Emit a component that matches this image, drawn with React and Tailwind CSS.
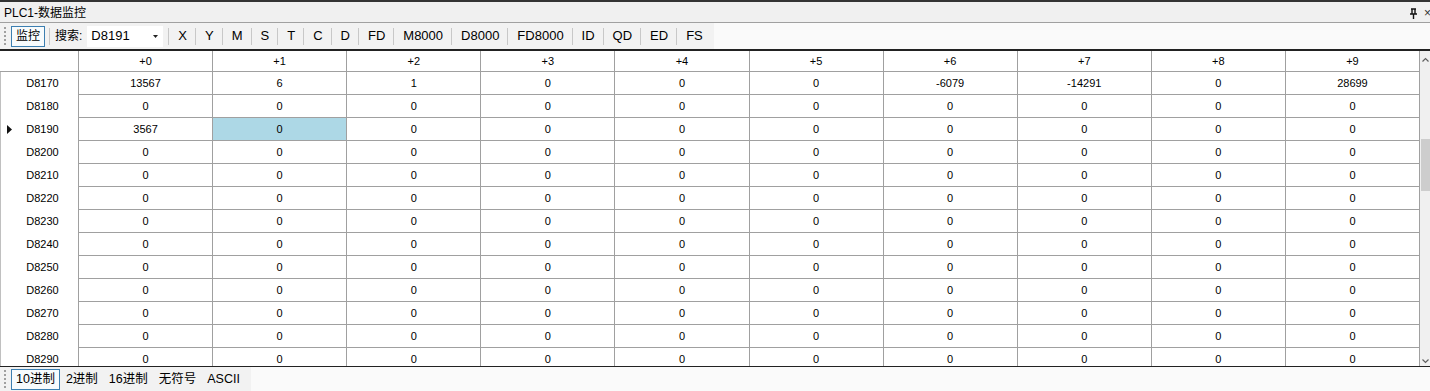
const FONT = { fontFamily: '"Liberation Sans", "Noto Sans CJK SC", sans-serif' };

const rows = [
  ['D8170', ['13567', '6', '1', '0', '0', '0', '-6079', '-14291', '0', '28699']],
  ['D8180'], ['D8190', ['3567', '0', '0', '0', '0', '0', '0', '0', '0', '0']],
  ['D8200'], ['D8210'], ['D8220'], ['D8230'], ['D8240'], ['D8250'],
  ['D8260'], ['D8270'], ['D8280'], ['D8290'],
];

const tools = ['X', 'Y', 'M', 'S', 'T', 'C', 'D', 'FD', 'M8000', 'D8000', 'FD8000', 'ID', 'QD', 'ED', 'FS'];
const modes = ['2进制', '16进制', '无符号', 'ASCII'];

function Grip() {
  return (
    <div className="flex flex-col gap-[2px] px-[4px]">
      {[0, 1, 2, 3, 4].map(i => <span key={i} className="w-[2px] h-[2px] bg-[#a0a0a0]" />)}
    </div>
  );
}

export default function App() {
  return (
    <div className="w-[1430px] h-[391px] overflow-hidden bg-[#f0f0f0] text-black flex flex-col" style={FONT}>
      <div className="h-[2px] bg-[#333]" />
      {/* title */}
      <div className="h-[21px] flex items-center justify-between pl-[4px] pt-[2px] border-b border-[#a0a0a0] bg-[#f0f0f0]">
        <span className="text-[12px]">PLC1-数据监控</span>
        <div className="flex items-center gap-[6px] text-[12px] text-[#333]">
          <svg width="9" height="11" viewBox="0 0 9 11">
            <path d="M2 1h5M3 1v5M6 1v5M1 6h7M4.5 6v5" stroke="#111" strokeWidth="1.4" fill="none" />
          </svg>
          <span className="w-[6px] overflow-hidden leading-none">×</span>
        </div>
      </div>
      {/* toolbar */}
      <div className="h-[26px] flex items-center bg-[#fafafa]">
        <div className="h-full flex items-center bg-[#f2f2f2] pr-[8px] text-[12px]">
          <Grip />
          <div className="h-[21px] px-[4px] flex items-center border border-[#3c7fb1] bg-[#f7fbfd] ml-[1px]">监控</div>
          <span className="w-px h-[17px] bg-[#c8c8c8] mx-[4px]" />
          <span className="ml-[1px]">搜索:</span>
          <div className="h-[21px] w-[76px] ml-[5px] bg-white flex items-center justify-between pl-[4px] pr-[5px] text-[13px]">
            <span>D8191</span>
            <svg width="5" height="3" viewBox="0 0 5 3"><path d="M0 0h5L2.5 3z" fill="#222" /></svg>
          </div>
          {tools.map(t => (
            <div key={t} className="flex items-center text-[13px]">
              <span className="w-px h-[17px] bg-[#c8c8c8] mx-[5px]" />
              <span className="pl-[4px] pr-[3px]">{t}</span>
            </div>
          ))}
        </div>
      </div>
      <div className="h-[2px] bg-[#222]" />
      {/* grid */}
      <div className="flex-1 flex bg-white overflow-hidden text-[11px]">
        <div className="w-[1420px] overflow-hidden">
          <div className="grid grid-cols-[79px_repeat(10,1fr)] h-[21px] border-b border-[#a0a0a0]">
            <div className="border-r border-[#a0a0a0]" />
            {Array.from({ length: 10 }, (_, i) => (
              <div key={i} className="flex items-center justify-center border-r border-[#a0a0a0]">+{i}</div>
            ))}
          </div>
          {rows.map(([name, vals]) => (
            <div key={name} className="grid grid-cols-[79px_repeat(10,1fr)] h-[23px]">
              <div className="relative flex items-center justify-center pl-[6px] border-r border-[#a0a0a0] border-l border-l-[#c0c0c0]">
                {name === 'D8190' && (
                  <svg className="absolute left-[6px] top-[7px]" width="5" height="9" viewBox="0 0 5 9"><path d="M0 0l5 4.5L0 9z" fill="#111" /></svg>
                )}
                {name}
              </div>
              {Array.from({ length: 10 }, (_, i) => (
                <div
                  key={i}
                  className={`flex items-center justify-center border-r border-b border-[#a0a0a0] ${name === 'D8190' && i === 1 ? 'bg-[#add8e6]' : ''}`}
                >
                  {vals ? vals[i] : '0'}
                </div>
              ))}
            </div>
          ))}
        </div>
        <div className="w-[10px] bg-[#f0f0f0] relative">
          <svg className="absolute left-[2px] top-[6px]" width="7" height="5" viewBox="0 0 7 5"><path d="M0.5 4.5L3.5 1.5 6.5 4.5" stroke="#606060" fill="none" strokeWidth="1.2" /></svg>
          <div className="absolute left-[1px] right-0 top-[88px] h-[52px] bg-[#cdcdcd]" />
          <svg className="absolute left-[2px] bottom-[2px]" width="7" height="5" viewBox="0 0 7 5"><path d="M0.5 0.5L3.5 3.5 6.5 0.5" stroke="#606060" fill="none" strokeWidth="1.2" /></svg>
        </div>
      </div>
      <div className="h-[1px] bg-[#222]" />
      {/* bottom tabs */}
      <div className="h-[24px] flex items-center bg-[#fafafa]">
        <div className="h-full flex items-center bg-[#f2f2f2] pr-[6px] text-[12.5px]">
          <Grip />
          <div className="h-[21px] px-[4px] flex items-center border border-[#3c7fb1] bg-[#f7fbfd] ml-[1px]">10进制</div>
          {modes.map(m => (
            <span key={m} className="px-[5px] ml-[1px]">{m}</span>
          ))}
        </div>
      </div>
    </div>
  );
}
